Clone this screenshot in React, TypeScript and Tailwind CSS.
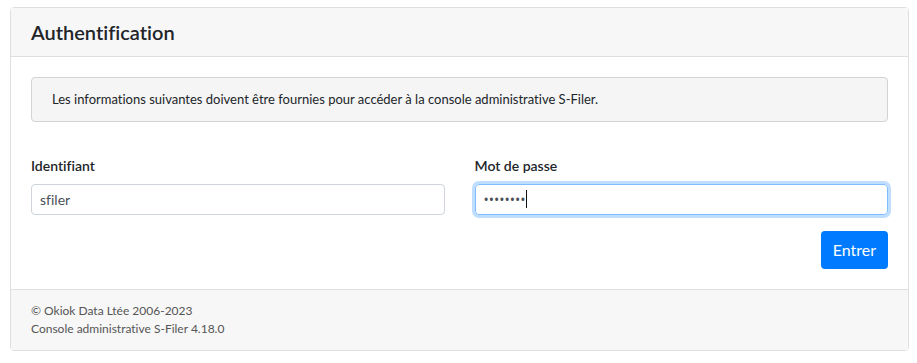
import { useState } from "react";

export default function App() {
  const [login, setLogin] = useState("sfiler");
  const [password, setPassword] = useState("motdepas");

  return (
    <div className="min-h-screen bg-white pt-[7px] pl-[10px] font-['Lato',sans-serif] text-[#212529] [font-variant-ligatures:none]">
      <div className="w-[899px] rounded border border-[#dfdfdf] bg-white">
        <div className="border-b border-[#dfdfdf] bg-[#f7f7f7] px-5 py-3">
          <h5 className="text-[20px] font-semibold leading-6">Authentification</h5>
        </div>

        <form className="p-5" onSubmit={(e) => e.preventDefault()}>
          <div className="rounded border border-[#d3d3d3] bg-[#f5f5f5] px-5 py-[11px] text-[13px] leading-[21px]">
            Les informations suivantes doivent être fournies pour accéder à la console administrative S-Filer.
          </div>

          <div className="mt-[33px] grid grid-cols-2 gap-x-[30px]">
            <div>
              <label className="mb-2 block text-sm font-semibold leading-[21px]">Identifiant</label>
              <input
                type="text"
                value={login}
                onChange={(e) => setLogin(e.target.value)}
                className="block h-[31px] w-full rounded border border-[#ced4da] px-2 text-sm text-[#495057] outline-none"
              />
            </div>
            <div>
              <label className="mb-2 block text-sm font-semibold leading-[21px]">Mot de passe</label>
              <div className="relative">
                <input
                  type="password"
                  value={password}
                  onChange={(e) => setPassword(e.target.value)}
                  className="block h-[31px] w-full rounded border border-[#80bdff] px-2 font-['Open_Sans',sans-serif] text-sm text-[#495057] caret-transparent shadow-[0_0_0_3px_rgba(0,123,255,0.25)] outline-none"
                />
                {/* caret as seen in the focused field */}
                <span className="pointer-events-none absolute left-[51px] top-[6px] h-[18px] w-px bg-[#111]" />
              </div>
            </div>
          </div>

          <div className="mt-4 flex justify-end">
            <button
              type="submit"
              className="h-[38px] rounded bg-[#007bff] px-3 text-base text-white"
            >
              Entrer
            </button>
          </div>
        </form>

        <div className="border-t border-[#dfdfdf] bg-[#f7f7f7] px-5 py-3 text-[12px] leading-[18px] text-[#555]">
          <div>© Okiok Data Ltée 2006-2023</div>
          <div>Console administrative S-Filer 4.18.0</div>
        </div>
      </div>
    </div>
  );
}
